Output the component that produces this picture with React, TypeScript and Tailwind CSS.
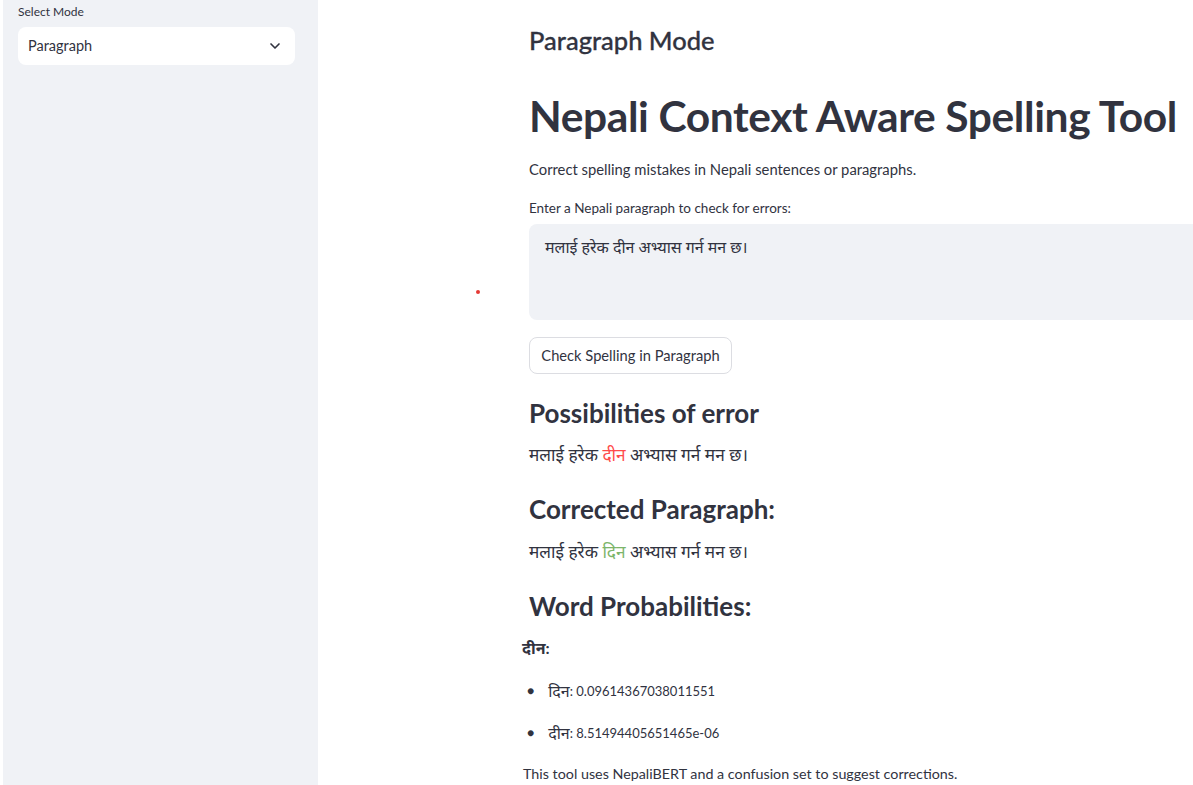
import { ChevronDown } from 'lucide-react'

const font = { fontFamily: 'Lato, "Noto Sans", sans-serif' }

const Sentence = ({ word, color }: { word: string; color: string }) => (
  <p className="text-[17.3px] leading-[24px] text-[#31333f]">
    मलाई हरेक <span className={color}>{word}</span> अभ्यास गर्न मन छ।
  </p>
)

export default function App() {
  return (
    <div className="flex h-[785px] w-[1193px] overflow-hidden bg-white text-[#31333f]" style={font}>
      {/* Sidebar */}
      <aside className="ml-[3px] w-[315px] shrink-0 bg-[#f0f2f6] pl-[15px] pr-[23px] pt-[4px]">
        <label className="block text-[12px] leading-[16px] text-[#31333f]">Select Mode</label>
        <div className="mt-[7px] flex h-[38px] items-center justify-between rounded-lg bg-white pl-[10px] pr-[12px]">
          <span className="text-[14.5px]">Paragraph</span>
          <ChevronDown className="h-4 w-4" strokeWidth={2.5} />
        </div>
      </aside>

      {/* Main */}
      <main className="relative flex-1">
        <span className="absolute left-[158px] top-[290px] h-[4px] w-[4px] rounded-full bg-[#e53935]" />
        <div className="ml-[211px] pt-[24px]">
          <h3 className="text-[25.5px] font-medium leading-[32px] [-webkit-text-stroke:0.3px_#31333f]">Paragraph Mode</h3>
          <h1 className="mt-[34px] whitespace-nowrap text-[42.5px] font-bold leading-[52px] tracking-[-0.4px]">
            Nepali Context Aware Spelling Tool
          </h1>
          <p className="mt-[17px] text-[14.8px] leading-[20px]">Correct spelling mistakes in Nepali sentences or paragraphs.</p>
          <p className="mt-[21px] text-[13.5px] leading-[16px]">Enter a Nepali paragraph to check for errors:</p>
          <div className="mt-[8px] h-[96px] w-[700px] rounded-l-lg bg-[#f0f2f6] px-[16px] pt-[10px]">
            <span className="text-[16px] leading-[26px]">मलाई हरेक दीन अभ्यास गर्न मन छ।</span>
          </div>
          <button className="mt-[17px] h-[37px] w-[203px] rounded-lg border border-[#dcdde2] bg-white text-[14.7px]">
            Check Spelling in Paragraph
          </button>
          <h2 className="mt-[23px] text-[26px] font-bold leading-[32px]">Possibilities of error</h2>
          <div className="mt-[14px]">
            <Sentence word="दीन" color="text-[#ff4b4b]" />
          </div>
          <h2 className="mt-[26px] text-[26px] font-bold leading-[32px]">Corrected Paragraph:</h2>
          <div className="mt-[15px]">
            <Sentence word="दिन" color="text-[#7cb56a]" />
          </div>
          <h2 className="mt-[26px] text-[26px] font-bold leading-[32px]">Word Probabilities:</h2>
          <p className="-ml-[7px] mt-[14px] text-[16px] font-bold leading-[24px]">दीन:</p>
          <ul className="mt-[19px] space-y-[18px]">
            <li className="flex items-center text-[13px] leading-[24px]">
              <span className="ml-[-2px] mr-[14px] text-[12px]">●</span>
              <span className="text-[16px]">दिन</span>: 0.09614367038011551
            </li>
            <li className="flex items-center text-[13px] leading-[24px]">
              <span className="ml-[-2px] mr-[14px] text-[12px]">●</span>
              <span className="text-[16px]">दीन</span>: 8.51494405651465e-06
            </li>
          </ul>
          <p className="-ml-[6px] mt-[19px] text-[14.3px] leading-[20px]">This tool uses NepaliBERT and a confusion set to suggest corrections.</p>
        </div>
      </main>
    </div>
  )
}
